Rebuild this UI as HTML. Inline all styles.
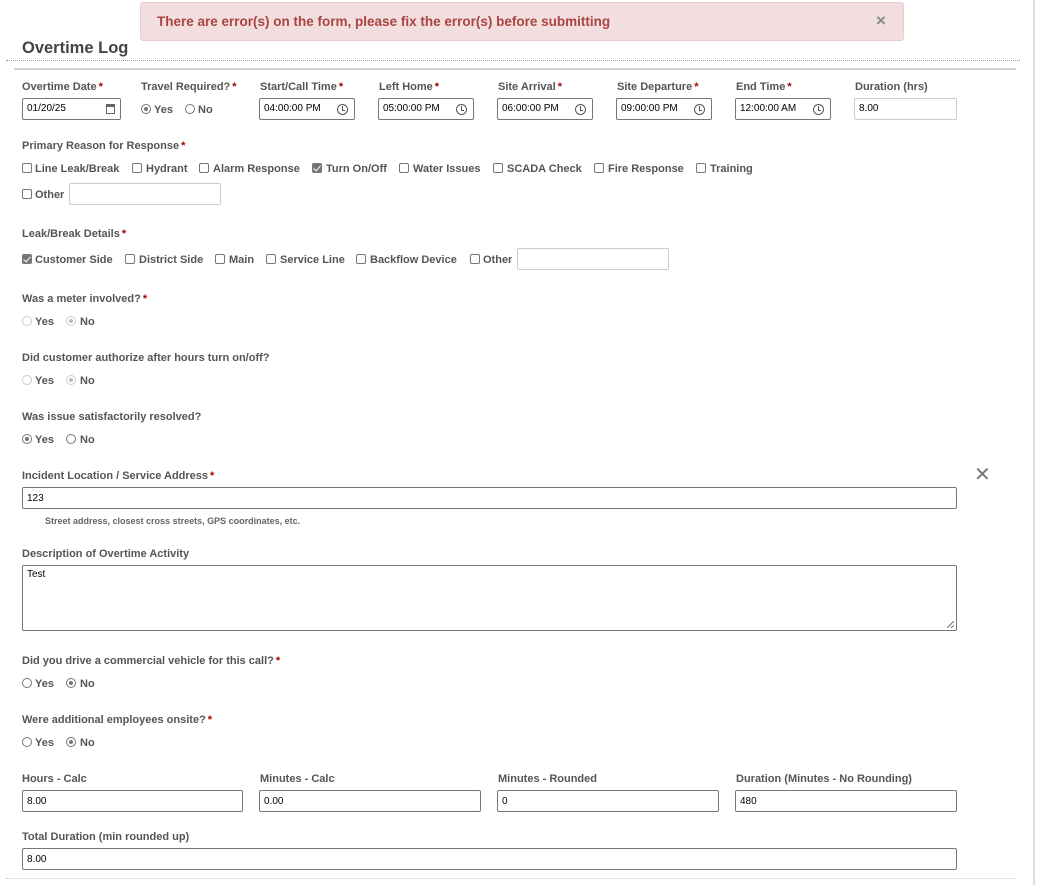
<!DOCTYPE html>
<html><head><meta charset="utf-8"><style>
*{box-sizing:border-box;margin:0;padding:0}
body{width:1037px;height:885px;background:#fff;position:relative;overflow:hidden;font-family:"Liberation Sans",Arial,sans-serif;color:#555;font-size:11px;font-weight:bold}
.a{position:absolute;white-space:nowrap}
.l{position:absolute;white-space:nowrap;line-height:13px;margin-top:1px}
.l i{color:#a00;font-style:normal;margin-left:2px}
.in{position:absolute;height:22px;border:1px solid #767676;border-radius:2px;background:#fff;font-weight:normal;color:#000;font-size:10px;padding-left:4px;line-height:20px}
.in.d{border-color:#ccc}
.cb{position:absolute;width:10px;height:10px;border:1px solid #767676;border-radius:2px;background:#fff}
.cb.on{background:#767676;border-color:#767676}
.cb.on:after{content:"";position:absolute;left:2px;top:0px;width:3px;height:6px;border:solid #fff;border-width:0 1.5px 1.5px 0;transform:rotate(40deg)}
.rd{position:absolute;width:10px;height:10px;border:1px solid #767676;border-radius:50%;background:#fff}
.rd.on:after{content:"";position:absolute;left:2px;top:2px;width:4px;height:4px;border-radius:50%;background:#767676}
.rd.dis{border-color:#ccc}
.rd.dis.on:after{background:#bbb}
.t{position:absolute;white-space:nowrap;line-height:13px;margin-top:1px}
.clk{position:absolute;right:6px;top:5px;width:11px;height:11px;border:1px solid #555;border-radius:50%}
.clk:after{content:"";position:absolute;left:4px;top:1px;width:2px;height:4px;border:solid #555;border-width:0 0 1px 1px}
</style></head><body>
<div class="a" style="left:140px;top:2px;width:764px;height:39px;background:#f2dede;border:1px solid #ebccd1;border-radius:3px"></div>
<div class="a" style="left:157px;top:14px;font-size:13.5px;color:#a94442;line-height:16px">There are error(s) on the form, please fix the error(s) before submitting</div>
<div class="a" style="left:876px;top:11px;font-size:17px;color:#888;line-height:20px">×</div>
<div class="a" style="left:22px;top:38px;font-size:16.5px;color:#444;line-height:20px">Overtime Log</div>
<div class="a" style="left:6px;top:60px;width:1014px;border-top:1px dotted #999"></div>
<div class="a" style="left:14px;top:68px;width:1002px;height:2px;background:#d3d3d3"></div>
<div class="a" style="left:1033px;top:0;width:2px;height:885px;background:#ddd"></div>
<div class="a" style="left:6px;top:878px;width:1010px;border-top:1px dotted #ccc"></div>

<div class="l" style="left:22px;top:80px">Overtime Date<i>*</i></div>
<div class="l" style="left:141px;top:80px">Travel Required?<i>*</i></div>
<div class="l" style="left:260px;top:80px">Start/Call Time<i>*</i></div>
<div class="l" style="left:379px;top:80px">Left Home<i>*</i></div>
<div class="l" style="left:498px;top:80px">Site Arrival<i>*</i></div>
<div class="l" style="left:617px;top:80px">Site Departure<i>*</i></div>
<div class="l" style="left:736px;top:80px">End Time<i>*</i></div>
<div class="l" style="left:855px;top:80px">Duration (hrs)</div>
<div class="in" style="left:22px;top:98px;width:99px">01/20/25<span class="a" style="right:5px;top:5px;width:9px;height:10px;border:1px solid #666;border-top-width:3px"></span></div>
<div class="rd on" style="left:141px;top:104px"></div><div class="t" style="left:154px;top:103px">Yes</div>
<div class="rd" style="left:185px;top:104px"></div><div class="t" style="left:198px;top:103px">No</div>
<div class="in" style="left:259px;top:98px;width:96px">04:00:00 PM<span class="clk"></span></div>
<div class="in" style="left:378px;top:98px;width:96px">05:00:00 PM<span class="clk"></span></div>
<div class="in" style="left:497px;top:98px;width:96px">06:00:00 PM<span class="clk"></span></div>
<div class="in" style="left:616px;top:98px;width:96px">09:00:00 PM<span class="clk"></span></div>
<div class="in" style="left:735px;top:98px;width:96px">12:00:00 AM<span class="clk"></span></div>
<div class="in d" style="left:854px;top:98px;width:103px">8.00</div>

<div class="l" style="left:22px;top:139px">Primary Reason for Response<i>*</i></div>
<div class="cb" style="left:22px;top:163px"></div><div class="t" style="left:35px;top:162px">Line Leak/Break</div>
<div class="cb" style="left:132px;top:163px"></div><div class="t" style="left:146px;top:162px">Hydrant</div>
<div class="cb" style="left:199px;top:163px"></div><div class="t" style="left:213px;top:162px">Alarm Response</div>
<div class="cb on" style="left:312px;top:163px"></div><div class="t" style="left:326px;top:162px">Turn On/Off</div>
<div class="cb" style="left:399px;top:163px"></div><div class="t" style="left:413px;top:162px">Water Issues</div>
<div class="cb" style="left:493px;top:163px"></div><div class="t" style="left:507px;top:162px">SCADA Check</div>
<div class="cb" style="left:594px;top:163px"></div><div class="t" style="left:608px;top:162px">Fire Response</div>
<div class="cb" style="left:696px;top:163px"></div><div class="t" style="left:710px;top:162px">Training</div>
<div class="cb" style="left:22px;top:189px"></div><div class="t" style="left:35px;top:188px">Other</div>
<div class="in d" style="left:69px;top:183px;width:152px"></div>

<div class="l" style="left:22px;top:227px">Leak/Break Details<i>*</i></div>
<div class="cb on" style="left:22px;top:254px"></div><div class="t" style="left:35px;top:253px">Customer Side</div>
<div class="cb" style="left:125px;top:254px"></div><div class="t" style="left:139px;top:253px">District Side</div>
<div class="cb" style="left:215px;top:254px"></div><div class="t" style="left:229px;top:253px">Main</div>
<div class="cb" style="left:266px;top:254px"></div><div class="t" style="left:280px;top:253px">Service Line</div>
<div class="cb" style="left:356px;top:254px"></div><div class="t" style="left:370px;top:253px">Backflow Device</div>
<div class="cb" style="left:470px;top:254px"></div><div class="t" style="left:483px;top:253px">Other</div>
<div class="in d" style="left:517px;top:248px;width:152px"></div>

<div class="l" style="left:22px;top:292px">Was a meter involved?<i>*</i></div>
<div class="rd dis" style="left:22px;top:316px"></div><div class="t" style="left:35px;top:315px">Yes</div>
<div class="rd dis on" style="left:66px;top:316px"></div><div class="t" style="left:80px;top:315px">No</div>

<div class="l" style="left:22px;top:351px">Did customer authorize after hours turn on/off?</div>
<div class="rd dis" style="left:22px;top:375px"></div><div class="t" style="left:35px;top:374px">Yes</div>
<div class="rd dis on" style="left:66px;top:375px"></div><div class="t" style="left:80px;top:374px">No</div>

<div class="l" style="left:22px;top:410px">Was issue satisfactorily resolved?</div>
<div class="rd on" style="left:22px;top:434px"></div><div class="t" style="left:35px;top:433px">Yes</div>
<div class="rd" style="left:66px;top:434px"></div><div class="t" style="left:80px;top:433px">No</div>

<div class="l" style="left:22px;top:469px">Incident Location / Service Address<i>*</i></div>
<div class="a" style="left:974px;top:465px;font-size:20px;font-weight:normal;color:#777;line-height:20px">✕</div>
<div class="in" style="left:22px;top:487px;width:935px;line-height:21px">123</div>
<div class="a" style="left:45px;top:516px;font-size:9px;color:#666;line-height:11px">Street address, closest cross streets, GPS coordinates, etc.</div>

<div class="l" style="left:22px;top:547px">Description of Overtime Activity</div>
<div class="in" style="left:22px;top:565px;width:935px;height:66px;line-height:18px">Test<span class="a" style="right:2px;bottom:2px;width:7px;height:7px;background:linear-gradient(135deg,transparent 45%,#777 45%,#777 55%,transparent 55%,transparent 75%,#777 75%,#777 85%,transparent 85%)"></span></div>

<div class="l" style="left:22px;top:654px">Did you drive a commercial vehicle for this call?<i>*</i></div>
<div class="rd" style="left:22px;top:678px"></div><div class="t" style="left:35px;top:677px">Yes</div>
<div class="rd on" style="left:66px;top:678px"></div><div class="t" style="left:80px;top:677px">No</div>

<div class="l" style="left:22px;top:713px">Were additional employees onsite?<i>*</i></div>
<div class="rd" style="left:22px;top:737px"></div><div class="t" style="left:35px;top:736px">Yes</div>
<div class="rd on" style="left:66px;top:737px"></div><div class="t" style="left:80px;top:736px">No</div>

<div class="l" style="left:22px;top:772px">Hours - Calc</div>
<div class="l" style="left:260px;top:772px">Minutes - Calc</div>
<div class="l" style="left:498px;top:772px">Minutes - Rounded</div>
<div class="l" style="left:736px;top:772px">Duration (Minutes - No Rounding)</div>
<div class="in" style="left:22px;top:790px;width:221px;line-height:21px">8.00</div>
<div class="in" style="left:259px;top:790px;width:222px;line-height:21px">0.00</div>
<div class="in" style="left:497px;top:790px;width:222px;line-height:21px">0</div>
<div class="in" style="left:735px;top:790px;width:222px;line-height:21px">480</div>

<div class="l" style="left:22px;top:830px">Total Duration (min rounded up)</div>
<div class="in" style="left:22px;top:848px;width:935px;line-height:21px">8.00</div>
</body></html>
